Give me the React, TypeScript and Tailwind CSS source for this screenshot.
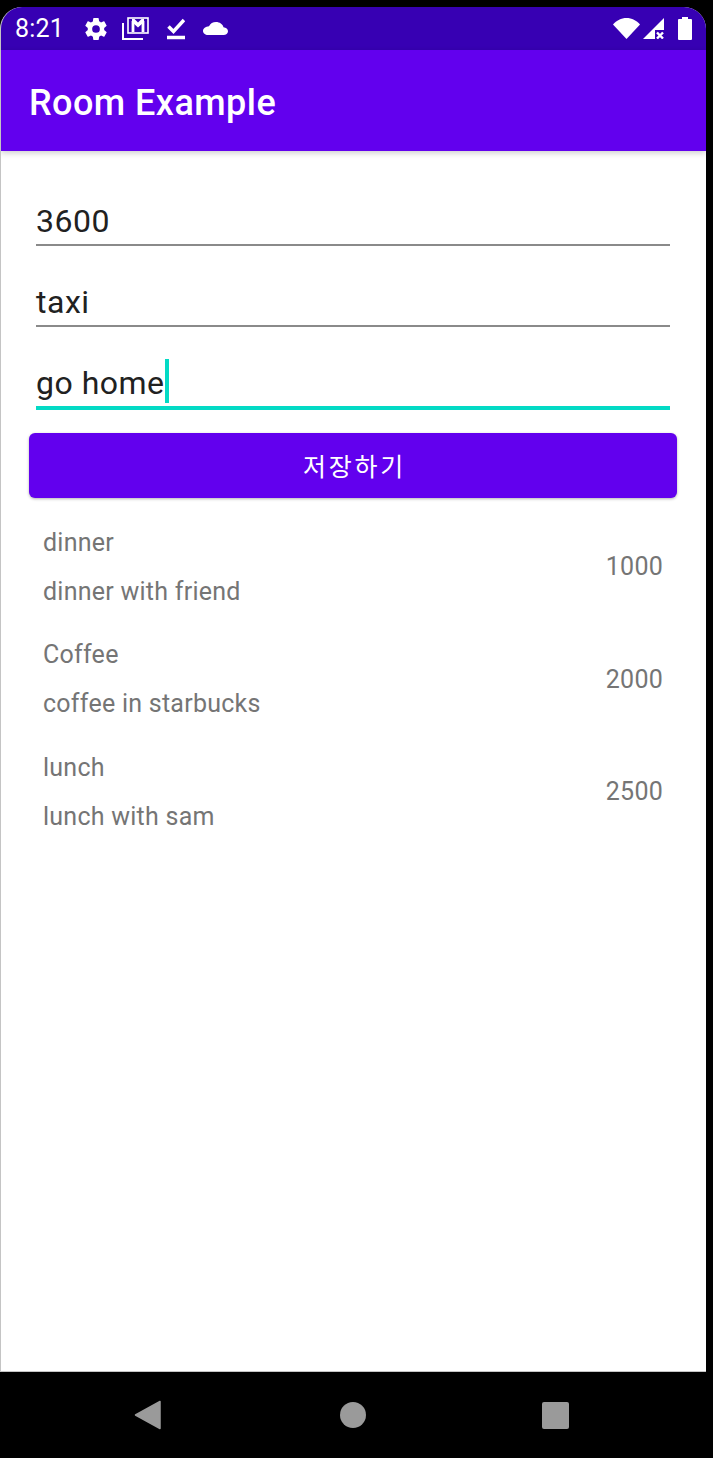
const Field = ({ value, focused }: { value: string; focused?: boolean }) => (
  <div
    className={
      focused
        ? "ml-[35px] mr-9 h-[51px] border-b-[4px] border-[#03dac5] flex items-start pt-[2px]"
        : "ml-[35px] mr-9 h-[49px] border-b-2 border-[#8a8a8a] flex items-start pt-[2px]"
    }
  >
    <span className="text-[32px] leading-[44px] tracking-[0.5px] text-[#212121]">{value}</span>
    {focused && <span className="w-[4px] h-[44px] -mt-[2px] bg-[#03dac5]" />}
  </div>
);

const Row = ({ title, note, price }: { title: string; note: string; price: string }) => (
  <div className="flex items-center justify-between pl-[42px] pr-[43px] h-[112.5px] text-[25px] tracking-[0.25px] text-[#757575]">
    <div className="flex flex-col gap-[17px]">
      <div className="leading-[32px]">{title}</div>
      <div className="leading-[32px]">{note}</div>
    </div>
    <div className="leading-[32px]">{price}</div>
  </div>
);

const StatusBar = () => (
  <div className="h-[43px] bg-[#3700b3] flex items-center pl-[14px] pr-[14px] text-white">
    <span className="text-[25px] leading-none w-[70px] tracking-[0.2px]">8:21</span>
    <svg width="22" height="22" viewBox="2 2 20 20" fill="white">
      <path d="M19.4 13c.04-.3.06-.65.06-1s-.02-.7-.07-1l2.1-1.65c.2-.15.25-.42.13-.64l-2-3.46c-.12-.22-.4-.3-.6-.22l-2.5 1c-.52-.4-1.08-.73-1.7-.98l-.37-2.65A.5.5 0 0 0 14 2h-4c-.25 0-.46.18-.5.42l-.37 2.65c-.6.25-1.17.6-1.7.98l-2.48-1c-.23-.09-.5 0-.6.22l-2 3.46c-.13.22-.07.5.12.64L4.57 11c-.05.3-.07.66-.07 1s.02.7.07 1l-2.1 1.65c-.2.15-.25.42-.13.64l2 3.46c.12.22.4.3.6.22l2.5-1c.52.4 1.08.73 1.7.98l.37 2.65c.04.24.25.42.5.42h4c.25 0 .46-.18.5-.42l.37-2.65c.6-.25 1.17-.6 1.7-.98l2.48 1c.23.09.5 0 .6-.22l2-3.46c.12-.22.07-.5-.12-.64L19.4 13zM12 15.500a3.500 3.500 0 1 1 0-7 3.500 3.500 0 0 1 0 7z" />
    </svg>
    <svg width="27" height="23" viewBox="0 0 27 23" fill="none" stroke="white" className="ml-[15px]">
      <rect x="6" y="1" width="20" height="15" strokeWidth="1.600" />
      <path d="M10 2h2.500l3.500 3.500L19.500 2H22v3l-6 5.500L10 5z" fill="white" stroke="none" />
      <path d="M11 15V4M21 15V4" strokeWidth="2.800" />
      <path d="M1 6v16h20" strokeWidth="2" />
    </svg>
    <svg width="18" height="22" viewBox="0 0 18 22" fill="none" stroke="white" strokeWidth="3.500" className="ml-[18px]">
      <path d="M1.500 8.500l5 5L17 2" />
      <path d="M0 19.500h18" />
    </svg>
    <svg width="25" height="13" viewBox="0 0 25 13" fill="white" className="ml-[18px] -mt-[1px]">
      <path d="M20.500 5.200C19.600 2.200 16.700 0 13 0 9.900 0 7.200 1.600 6 4.200 2.600 4.400 0 6.400 0 9c0 2.300 2.200 4 5 4h15.500c2.500 0 4.500-1.700 4.500-3.800 0-2-1.900-3.700-4.500-4z" />
    </svg>
    <div className="ml-auto flex items-center">
      <svg width="27" height="21" viewBox="0 0 27 21" fill="white">
        <path d="M0 6.500C3.500 2.500 8.200 0 13.500 0S23.500 2.500 27 6.500L13.500 21z" />
      </svg>
      <svg width="21" height="21" viewBox="0 0 21 21" className="ml-[3px]">
        <path d="M21 0v21H0z" fill="white" />
        <path d="M12 12h9v9h-9z" fill="#3700b3" />
        <path d="M14 14.500l6 6M20 14.500l-6 6" stroke="white" strokeWidth="2.400" fill="none" />
      </svg>
      <svg width="14" height="23" viewBox="0 0 14 23" fill="white" className="ml-[14px]">
        <path d="M4 2V0h6v2h3a1 1 0 0 1 1 1v19a1 1 0 0 1-1 1H1a1 1 0 0 1-1-1V3a1 1 0 0 1 1-1z" />
      </svg>
    </div>
  </div>
);

export default function App() {
  return (
    <div className="w-[713px] h-[1458px] bg-black flex flex-col pt-[7px] font-['Roboto',sans-serif] antialiased">
      <div className="w-[706px] h-[1365px] flex flex-col bg-white border-l border-b border-[#c4c4c4] rounded-t-[22px] overflow-hidden">
        <StatusBar />
        <div className="h-[101px] bg-[#6200ee] flex items-center pl-[28px] pt-[4px] shadow-[0_2px_6px_rgba(0,0,0,0.2)]">
          <span className="text-[36px] tracking-[0.45px] font-medium text-white">Room Example</span>
        </div>
        <div className="pt-[46px] flex flex-col gap-[32px]">
          <Field value="3600" />
          <Field value="taxi" />
          <Field value="go home" focused />
        </div>
        <button className="ml-[28px] mr-[29px] mt-[23px] h-[65px] shrink-0 rounded-[6px] bg-[#6200ee] pl-[3px] text-white text-[25px] tracking-[2.800px] shadow-[0_1px_3px_rgba(0,0,0,0.3)] font-['Noto_Sans_CJK_KR',sans-serif]">
          저장하기
        </button>
        <div className="mt-[13px]">
          <Row title="dinner" note="dinner with friend" price="1000" />
          <Row title="Coffee" note="coffee in starbucks" price="2000" />
          <Row title="lunch" note="lunch with sam" price="2500" />
        </div>
      </div>
      <div className="flex-1 flex items-center pl-[134px]">
        <svg width="28" height="30" viewBox="0 0 28 30" fill="#9a9a9a">
          <path d="M26 1.500L1.500 15 26 28.500z" stroke="#9a9a9a" strokeWidth="1.500" strokeLinejoin="round" />
        </svg>
        <div className="ml-[178px] w-[26px] h-[26px] rounded-full bg-[#9a9a9a]" />
        <div className="ml-[176px] w-[27px] h-[27px] rounded-[2px] bg-[#9a9a9a]" />
      </div>
    </div>
  );
}
